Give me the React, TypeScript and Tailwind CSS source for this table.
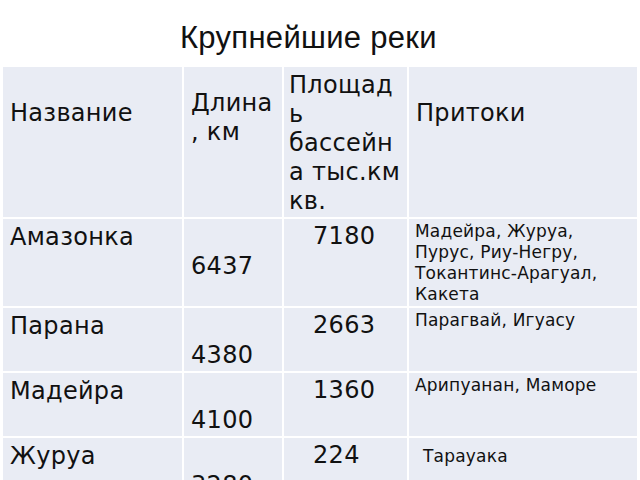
const rows = [
  { name: "Амазонка", len: "6437", area: "7180", trib: ["Мадейра, Журуа,", "Пурус, Риу-Негру,", "Токантинс-Арагуал,", "Какета"], h: "h-[87px]" },
  { name: "Парана", len: "4380", area: "2663", trib: ["Парагвай, Игуасу"], h: "h-[63px]" },
  { name: "Мадейра", len: "4100", area: "1360", trib: ["Арипуанан, Маморе"], h: "h-[63px]" },
  { name: "Журуа", len: "3280", area: "224", trib: ["Тарауака"], h: "h-[80px]", indent: true },
];

const cell = "bg-[#e9ecf4] text-[#111111]";

export default function App() {
  return (
    <div className="w-[640px] h-[480px] overflow-hidden bg-white font-['DejaVu_Sans',sans-serif]">
      <div className="h-[67px] pt-[22px] pl-[180px] text-[31px] leading-none tracking-[0.3px] text-[#111111] font-['Liberation_Sans',Arial,sans-serif]">
        Крупнейшие реки
      </div>

      <div className="ml-[3px] grid grid-cols-[179px_98px_123px_228px] gap-[2px] bg-white text-[24px] leading-[29px] tracking-[0.3px]">
        {/* header */}
        <div className={`${cell} h-[150px] pl-[7px] pt-[32px]`}>Название</div>
        <div className={`${cell} pl-[7px] pt-[22px]`}>
          <div>Длина</div>
          <div>, км</div>
        </div>
        <div className={`${cell} pl-[5px] pt-[4px]`}>
          <div>Площад</div>
          <div>ь</div>
          <div>бассейн</div>
          <div>а тыс.км</div>
          <div>кв.</div>
        </div>
        <div className={`${cell} pl-[7px] pt-[32px]`}>Притоки</div>

        {rows.map((r) => (
          <div key={r.name} className="contents">
            <div className={`${cell} ${r.h} pl-[7px] pt-[4px]`}>{r.name}</div>
            <div className={`${cell} pl-[7px] pt-[33px]`}>{r.len}</div>
            <div className={`${cell} pl-[29px] pt-[3px]`}>{r.area}</div>
            <div className={`${cell} ${r.indent ? "pl-[14px] pt-[8px]" : "pl-[6px] pt-[2px]"} text-[17px] leading-[21px] tracking-[0.2px]`}>
              {r.trib.map((t) => (
                <div key={t}>{t}</div>
              ))}
            </div>
          </div>
        ))}
      </div>
    </div>
  );
}
